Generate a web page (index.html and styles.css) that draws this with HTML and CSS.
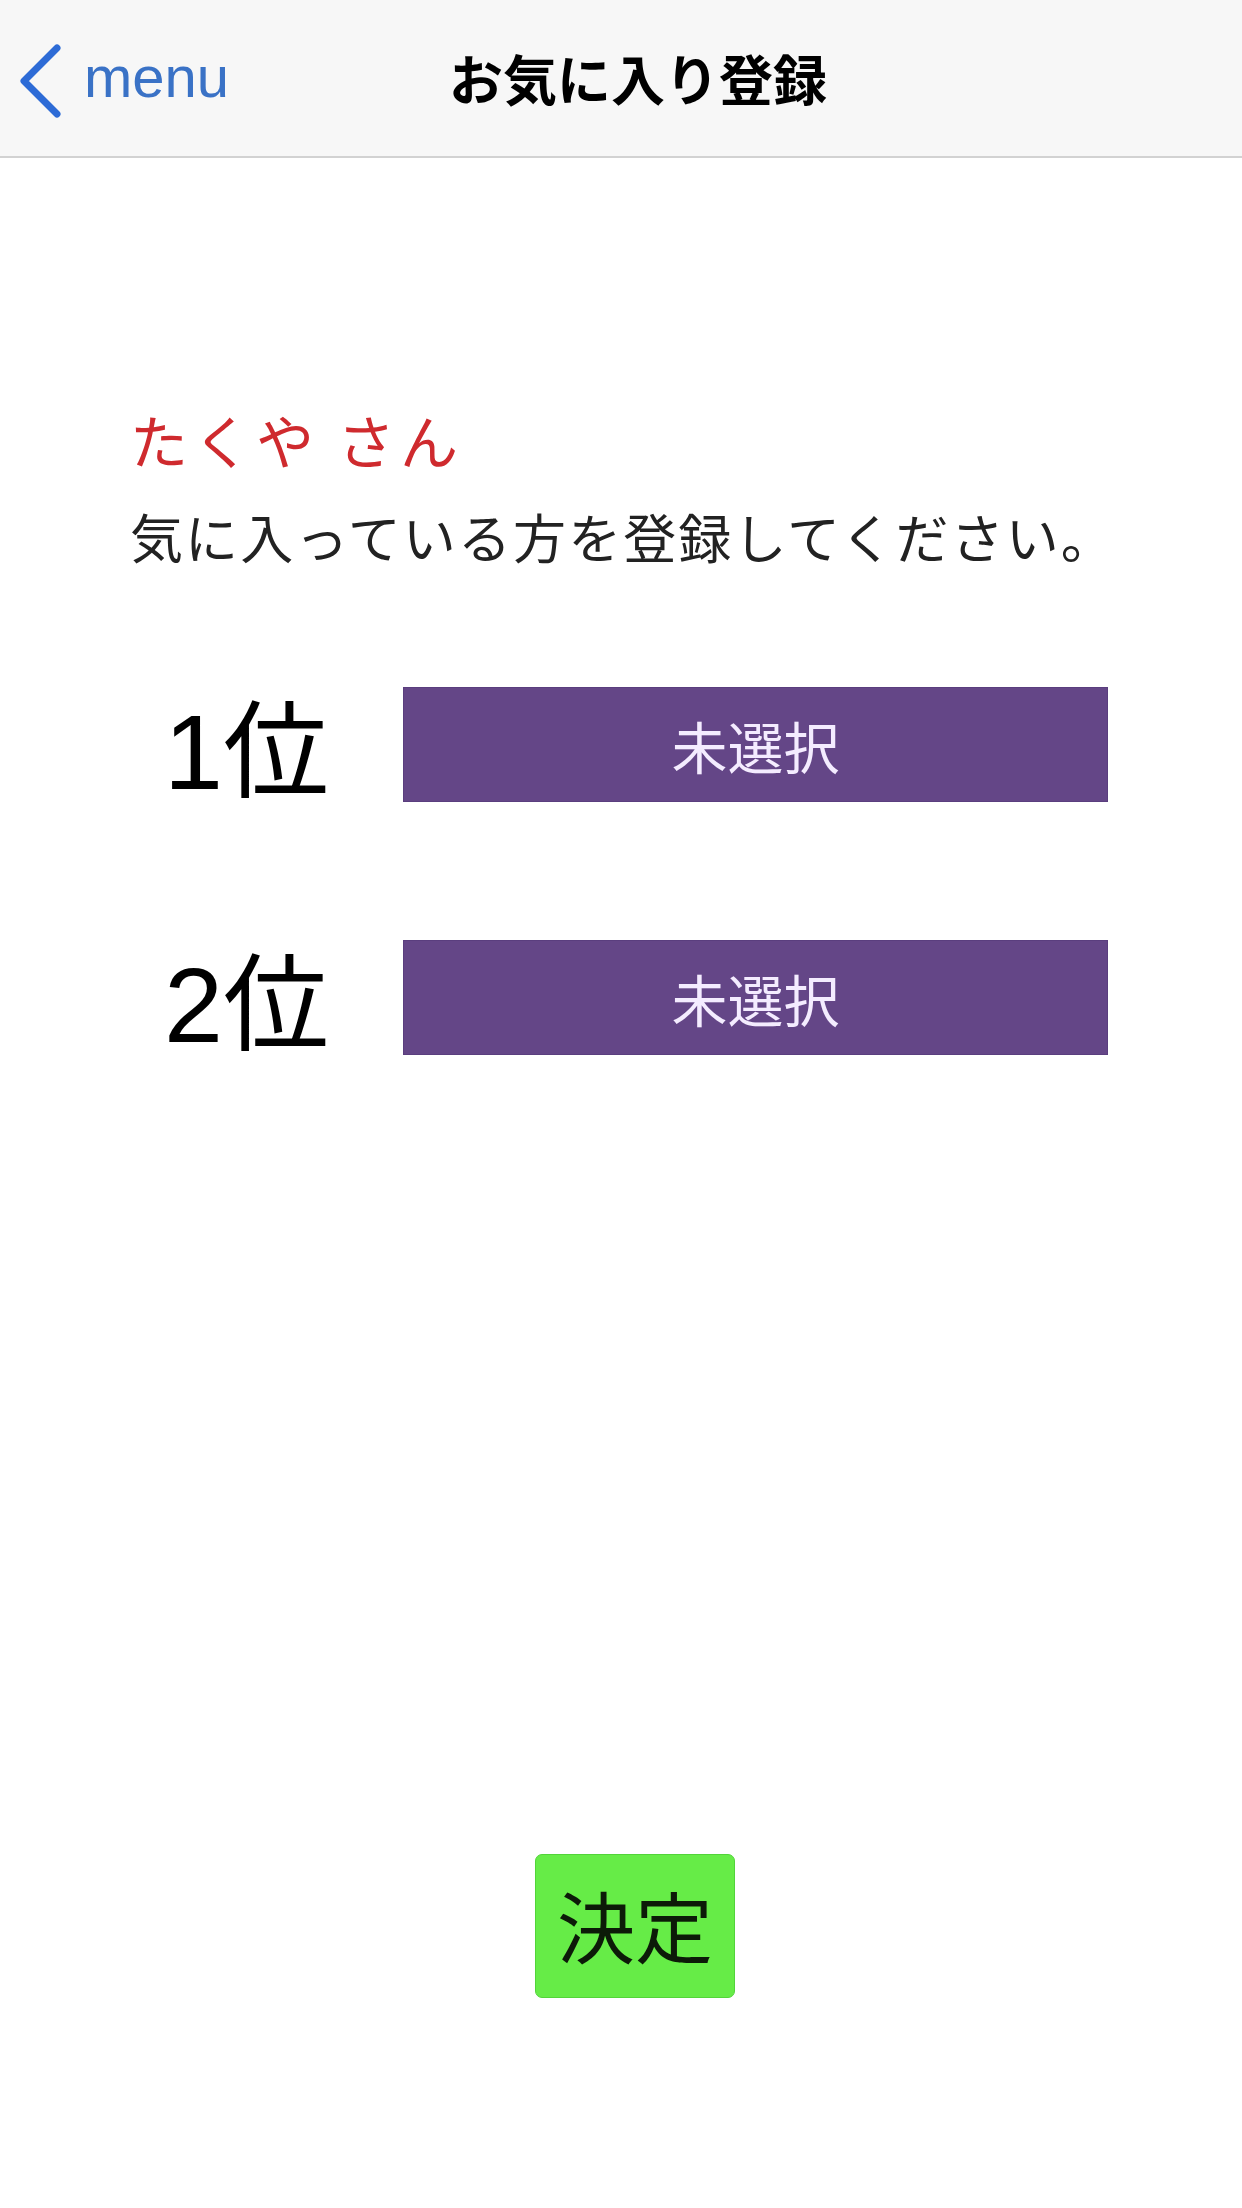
FILE: index.html
```html
<!DOCTYPE html>
<html lang="ja">
<head>
<meta charset="utf-8">
<title>お気に入り登録</title>
<link rel="stylesheet" href="styles.css">
</head>
<body>
<header class="navbar">
  <a class="back" href="#">
    <svg class="chevron" width="44" height="74" viewBox="0 0 44 74" aria-hidden="true">
      <path d="M39 4 L6 37 L39 70" fill="none" stroke="#2d6bd6" stroke-width="7" stroke-linecap="round" stroke-linejoin="round"/>
    </svg>
    <span class="back-label">menu</span>
  </a>
  <h1 class="title">お気に入り登録</h1>
</header>
<main class="content">
  <section class="intro">
    <p class="name">たくや さん</p>
    <p class="lead">気に入っている方を登録してください。</p>
  </section>
  <section class="ranks">
    <div class="rank-row">
      <span class="rank-label">1位</span>
      <button class="pick">未選択</button>
    </div>
    <div class="rank-row">
      <span class="rank-label">2位</span>
      <button class="pick">未選択</button>
    </div>
  </section>
  <div class="actions">
    <button class="decide">決定</button>
  </div>
</main>
</body>
</html>
```
FILE: styles.css
```css
* { box-sizing: border-box; }
html, body { margin: 0; padding: 0; }
body {
  width: 1242px;
  height: 2208px;
  background: #ffffff;
  font-family: "Noto Sans CJK JP", "Liberation Sans", sans-serif;
  color: #111;
  overflow: hidden;
}
.navbar {
  height: 158px;
  background: #f7f7f7;
  border-bottom: 2px solid #d2d2d2;
  display: flex;
  align-items: center;
  padding-left: 18px;
}
.back {
  display: flex;
  align-items: center;
  gap: 22px;
  text-decoration: none;
  color: #3a72c6;
  margin-top: 6px;
}
.chevron { display: block; }
.back-label {
  font-family: "Liberation Sans", "Noto Sans", sans-serif;
  font-size: 58px;
  line-height: 1;
  padding-bottom: 8px;
}
.title {
  margin: 0 0 0 220px;
  font-size: 54px;
  font-weight: 700;
  line-height: 1;
  color: #000;
}
.content {
  display: flex;
  flex-direction: column;
}
.intro {
  padding: 252px 0 0 130px;
  display: flex;
  flex-direction: column;
  gap: 42px;
}
.intro p { margin: 0; line-height: 1; }
.name {
  font-size: 58px;
  color: #cf2a2e;
  letter-spacing: 5px;
}
.lead {
  font-size: 53px;
  color: #222;
  letter-spacing: 2.1px;
}
.ranks {
  margin-top: 124px;
  display: flex;
  flex-direction: column;
  gap: 138px;
}
.rank-row {
  display: flex;
  align-items: center;
  padding-left: 164px;
}
.rank-label {
  width: 239px;
  padding-top: 14px;
  font-family: "Liberation Sans", "Noto Sans CJK JP", sans-serif;
  font-size: 106px;
  line-height: 100px;
  color: #000;
}
.pick {
  width: 705px;
  height: 115px;
  margin: 0;
  padding: 0;
  border: 1px solid #5a3e7e;
  background: #644687;
  color: #f4ecff;
  font-family: "Noto Sans CJK JP", sans-serif;
  font-size: 56px;
  line-height: 1;
  display: flex;
  align-items: center;
  justify-content: center;
}
.actions {
  margin-top: 799px;
  display: flex;
  justify-content: center;
  padding-left: 28px;
}
.decide {
  width: 200px;
  height: 144px;
  margin: 0;
  padding: 0 0 4px;
  border: 1px solid #52d43a;
  border-radius: 7px;
  background: #66ec47;
  color: #0c1a08;
  font-family: "Noto Sans CJK JP", sans-serif;
  font-size: 78px;
  line-height: 1;
  display: flex;
  align-items: center;
  justify-content: center;
}
```
